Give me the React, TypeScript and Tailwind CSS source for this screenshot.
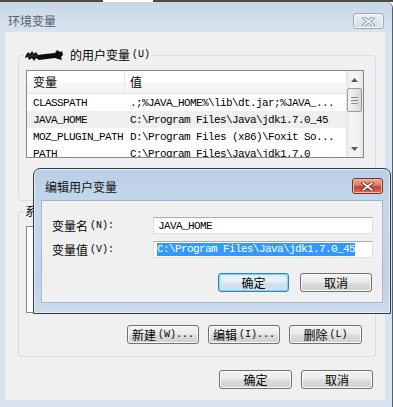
import type { ReactNode } from 'react';

const mono = "font-['Liberation_Mono',monospace] text-[11px] tracking-[-0.6px]";
const monoTight = "font-['Liberation_Mono',monospace] text-[10px]";

function Btn({ children, className, isDefault }: { children: ReactNode; className: string; isDefault?: boolean }) {
  return (
    <div
      className={`${className} h-[19px] flex items-center justify-center rounded-[3px] border text-black ${
        isDefault
          ? 'border-[#3c7fb1] bg-[linear-gradient(to_bottom,#eef5fa_0%,#e4eef6_48%,#d4e4f0_52%,#c8dcec_100%)] shadow-[inset_0_0_0_1px_#7fd3f5,inset_0_0_2px_2px_#c5ebfa]'
          : 'border-[#707070] bg-[linear-gradient(to_bottom,#f2f2f2_0%,#ebebeb_48%,#dddddd_52%,#cfcfcf_100%)] shadow-[inset_0_0_0_1px_#fbfbfb]'
      }`}
    >
      {children}
    </div>
  );
}

function CloseBtn({ className, active }: { className: string; active?: boolean }) {
  return (
    <div
      className={`${className} w-[31px] h-[16px] flex items-center justify-center rounded-[3px] border ${
        active
          ? 'border-[#7a2f24] bg-[linear-gradient(to_bottom,#e9a99b_0%,#d97a69_45%,#c5432f_55%,#d2705c_100%)] shadow-[inset_0_0_0_1px_#f0b9ad]'
          : 'border-[#9aa8ba] bg-[linear-gradient(to_bottom,#eef2f7_0%,#e0e7f0_50%,#d3dce7_100%)] shadow-[inset_0_0_0_1px_#f4f7fa]'
      }`}
    >
      <svg width="13" height="9" viewBox="0 0 13 9">
        <path d="M2 1 L11 8 M11 1 L2 8" stroke={active ? '#5a1d14' : '#7d8898'} strokeWidth="3.4" strokeLinecap="round" fill="none" />
        <path d="M2 1 L11 8 M11 1 L2 8" stroke={active ? '#ffffff' : '#f3f5f8'} strokeWidth="1.6" strokeLinecap="round" fill="none" />
      </svg>
    </div>
  );
}

function Blob() {
  return (
    <svg width="38" height="13" viewBox="0 0 38 13">
      <path
        d="M1 6 L3 3 L5 5 L7 2 L9 5 L11 3 L13 6 L20 5 L30 4 L32 1 L35 3 L37 2 L38 6 L36 8 L37 11 L33 10 L30 9 L22 10 L14 11 L11 9 L9 12 L7 9 L4 11 L3 8 L0 9 Z"
        fill="#0d0d0d"
      />
      <path d="M2 7 L12 7 M3 9 L10 4" stroke="#3a3a3a" strokeWidth="1" />
    </svg>
  );
}

function ScrollBar() {
  return (
    <div className="w-[17px] h-full flex flex-col bg-[linear-gradient(to_right,#e6e6e6,#f4f4f4_30%,#f4f4f4_70%,#e6e6e6)]">
      <div className="h-[17px] flex items-center justify-center">
        <svg width="7" height="4" viewBox="0 0 7 4">
          <path d="M0 4 L3.5 0 L7 4 Z" fill="#4e5866" />
        </svg>
      </div>
      <div className="mx-[1px] h-[24px] rounded-[2px] border border-[#9b9b9b] bg-[linear-gradient(to_right,#f3f3f3,#e8e8e8_50%,#d8d8d8)] flex flex-col items-center justify-center gap-[2px]">
        <div className="w-[7px] h-[1px] bg-[#8b8b8b]" />
        <div className="w-[7px] h-[1px] bg-[#8b8b8b]" />
        <div className="w-[7px] h-[1px] bg-[#8b8b8b]" />
      </div>
      <div className="flex-1" />
      <div className="h-[17px] flex items-center justify-center">
        <svg width="7" height="4" viewBox="0 0 7 4">
          <path d="M0 0 L7 0 L3.5 4 Z" fill="#4e5866" />
        </svg>
      </div>
    </div>
  );
}

const userVars = [
  { name: 'CLASSPATH', value: '.;%JAVA_HOME%\\lib\\dt.jar;%JAVA_...' },
  { name: 'JAVA_HOME', value: 'C:\\Program Files\\Java\\jdk1.7.0_45', selected: true },
  { name: 'MOZ_PLUGIN_PATH', value: 'D:\\Program Files (x86)\\Foxit So...' },
  { name: 'PATH', value: 'C:\\Program Files\\Java\\jdk1.7.0' },
];

export default function App() {
  return (
    <div className="relative w-[393px] h-[407px] overflow-hidden bg-white text-black font-['Noto_Sans_CJK_SC',sans-serif] text-[12px] leading-[14px] select-none">
      {/* window behind */}
      <div className="flex h-[2px]">
        <div className="w-[103px] bg-[#4b4b4b]" />
        <div className="w-[50px] bg-white" />
        <div className="flex-1 bg-[#4b4b4b]" />
      </div>

      {/* 环境变量 window (inactive) */}
      <div className="h-[405px] flex flex-col border-r border-[#55626f] rounded-tr-[6px] bg-[#d9e3ef]">
        <div className="h-[30px] flex justify-between pl-[8px] pr-[8px] rounded-tr-[6px] bg-[linear-gradient(to_bottom,#c7d5e6,#d5e0ed_70%,#d9e3ef)]">
          <span className="mt-[12px] text-[#56606c]">环境变量</span>
          <CloseBtn className="mt-[11px]" />
        </div>

        <div className="flex pl-[5px] pr-[7px]">
          <div className="w-[380px] h-[368px] bg-[#f0f0f0] flex flex-col">
            {/* user variables */}
            <div className="ml-[13px] mt-[23px] w-[358px] h-[146px] border border-[#d5dfe5] rounded-[3px] flex flex-col">
              <div className="-mt-[8px] ml-[5px] w-fit h-[14px] px-[1px] bg-[#f0f0f0] flex items-center gap-[7px]">
                <Blob />
                <span className="flex items-center">
                  的用户变量<span className={`${monoTight} pl-[2px]`}>(U)</span>
                </span>
              </div>
              <div className="mt-[8px] ml-[7px] w-[338px] h-[88px] border border-[#828790] bg-white flex overflow-hidden">
                <div className="flex-1 flex flex-col">
                  <div className="h-[23px] shrink-0 flex items-center border-b border-[#e5e5e5] bg-[linear-gradient(to_bottom,#ffffff_0%,#ffffff_50%,#f7f8f9_51%,#f3f4f6_100%)]">
                    <div className="w-[98px] h-full flex items-center pl-[6px] border-r border-[#e5e5e5]">变量</div>
                    <div className="pl-[5px]">值</div>
                  </div>
                  {userVars.map((v) => (
                    <div key={v.name} className={`h-[17px] shrink-0 flex items-center ${v.selected ? 'bg-[#efefef]' : ''}`}>
                      <div className={`${mono} w-[98px] pl-[6px] whitespace-nowrap`}>{v.name}</div>
                      <div className={`${mono} pl-[5px] whitespace-nowrap`}>{v.value}</div>
                    </div>
                  ))}
                </div>
                <ScrollBar />
              </div>
              <div className="mt-[10px] flex justify-end gap-[9px] pr-[13px]">
                <Btn className="w-[72px]">
                  新建<span className={`${monoTight} pl-[2px]`}>(N)...</span>
                </Btn>
                <Btn className="w-[72px]">
                  编辑<span className={`${monoTight} pl-[2px]`}>(E)...</span>
                </Btn>
                <Btn className="w-[73px]">
                  删除<span className={`${monoTight} pl-[2px]`}>(D)</span>
                </Btn>
              </div>
            </div>

            {/* system variables */}
            <div className="ml-[13px] mt-[10px] w-[358px] h-[146px] border border-[#d5dfe5] rounded-[3px] flex flex-col">
              <div className="-mt-[8px] ml-[5px] w-fit h-[14px] px-[1px] bg-[#f0f0f0] flex items-center">
                系统变量<span className={`${monoTight} pl-[2px]`}>(S)</span>
              </div>
              <div className="mt-[8px] ml-[7px] w-[338px] h-[87px] border border-[#828790] bg-white" />
              <div className="mt-[12px] flex justify-end gap-[9px] pr-[13px]">
                <Btn className="w-[72px]">
                  新建<span className={`${monoTight} pl-[2px]`}>(W)...</span>
                </Btn>
                <Btn className="w-[72px]">
                  编辑<span className={`${monoTight} pl-[2px]`}>(I)...</span>
                </Btn>
                <Btn className="w-[73px]">
                  删除<span className={`${monoTight} pl-[2px]`}>(L)</span>
                </Btn>
              </div>
            </div>

            <div className="mt-[13px] flex justify-end gap-[9px] pr-[12px]">
              <Btn className="w-[73px]">确定</Btn>
              <Btn className="w-[72px]">取消</Btn>
            </div>
          </div>
        </div>
      </div>

      {/* 编辑用户变量 dialog (active, on top) */}
      <div className="absolute left-[33px] top-[168px] w-[358px] h-[146px] flex flex-col rounded-t-[7px] border border-[#2e3a48] bg-[linear-gradient(to_bottom,#b9cee6,#c6d7ea_25%,#bfd2e8_80%,#cddcec)] shadow-[inset_0_0_0_1px_#e4edf7]">
        <div className="h-[31px] shrink-0 flex justify-between pl-[11px] pr-[7px]">
          <span className="mt-[11px] text-[#111]">编辑用户变量</span>
          <CloseBtn className="mt-[9px]" active />
        </div>
        <div className="mx-[7px] h-[103px] bg-[#f0f0f0] border border-[#a9bad0] border-t-[#9fb3cb] flex flex-col">
          <div className="mt-[16px] ml-[10px] flex flex-col gap-[7px]">
            <div className="h-[17px] flex items-center">
              <div className="w-[101px] flex items-center">
                变量名<span className={`${monoTight} pl-[2px]`}>(N):</span>
              </div>
              <div className="w-[220px] h-[17px] flex items-center pl-[4px] bg-white border border-[#dbdfe6] border-t-[#abadb3]">
                <span className={mono}>JAVA_HOME</span>
              </div>
            </div>
            <div className="h-[17px] flex items-center">
              <div className="w-[101px] flex items-center">
                变量值<span className={`${monoTight} pl-[2px]`}>(V):</span>
              </div>
              <div className="w-[220px] h-[17px] flex items-center pl-[3px] bg-white border border-[#dbdfe6] border-t-[#abadb3]">
                <span className={`${mono} bg-[#3399ff] text-white leading-[13px]`}>C:\Program Files\Java\jdk1.7.0_45</span>
              </div>
            </div>
          </div>
          <div className="mt-[15px] flex justify-end gap-[11px] pr-[10px]">
            <Btn className="w-[71px]" isDefault>
              确定
            </Btn>
            <Btn className="w-[72px]">取消</Btn>
          </div>
        </div>
      </div>
    </div>
  );
}
